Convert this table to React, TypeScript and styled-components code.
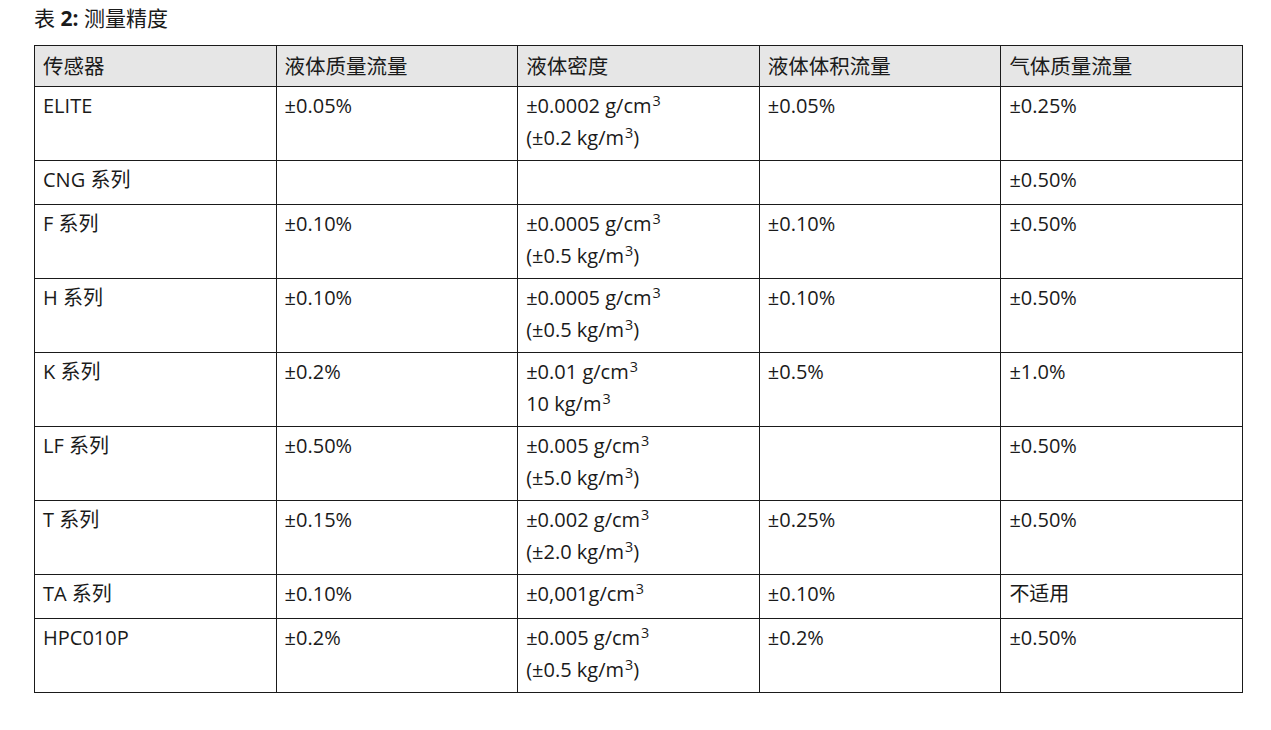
import React from 'react'
import styled, { createGlobalStyle } from 'styled-components'

const GlobalStyle = createGlobalStyle`
  html, body {
    margin: 0;
    padding: 0;
    background: #fff;
  }
  body {
    font-family: "Open Sans", "Noto Sans CJK SC", sans-serif;
    color: #1a1a1a;
  }
`

type Cell = React.ReactNode

const Sup = styled.sup`
  font-size: 0.72em;
  line-height: 0;
  vertical-align: 0.5em;
  margin-left: 1px;
`

const density = (value: string, kg: string, paren = true) => (
  <>
    {value}<Sup>3</Sup>
    {kg && (
      <>
        <br />
        {paren ? `(${kg}` : kg}<Sup>3</Sup>{paren ? ')' : ''}
      </>
    )}
  </>
)

const rows: { tall: boolean; cells: Cell[] }[] = [
  { tall: true, cells: ['ELITE', '±0.05%', density('±0.0002 g/cm', '±0.2 kg/m'), '±0.05%', '±0.25%'] },
  { tall: false, cells: ['CNG 系列', '', '', '', '±0.50%'] },
  { tall: true, cells: ['F 系列', '±0.10%', density('±0.0005 g/cm', '±0.5 kg/m'), '±0.10%', '±0.50%'] },
  { tall: true, cells: ['H 系列', '±0.10%', density('±0.0005 g/cm', '±0.5 kg/m'), '±0.10%', '±0.50%'] },
  { tall: true, cells: ['K 系列', '±0.2%', density('±0.01 g/cm', '10 kg/m', false), '±0.5%', '±1.0%'] },
  { tall: true, cells: ['LF 系列', '±0.50%', density('±0.005 g/cm', '±5.0 kg/m'), '', '±0.50%'] },
  { tall: true, cells: ['T 系列', '±0.15%', density('±0.002 g/cm', '±2.0 kg/m'), '±0.25%', '±0.50%'] },
  { tall: false, cells: ['TA 系列', '±0.10%', density('±0,001g/cm', ''), '±0.10%', '不适用'] },
  { tall: true, cells: ['HPC010P', '±0.2%', density('±0.005 g/cm', '±0.5 kg/m'), '±0.2%', '±0.50%'] },
]

const headers = ['传感器', '液体质量流量', '液体密度', '液体体积流量', '气体质量流量']

const Page = styled.div`
  padding: 4px 34px 0;
`

const Caption = styled.div`
  font-size: 21px;
  line-height: 28px;
  height: 41px;
  b {
    font-weight: 700;
  }
`

const Table = styled.table`
  border-collapse: collapse;
  table-layout: fixed;
  width: 1209px;
`

const HeadCell = styled.th`
  background: #e6e6e6;
  border: 1px solid #1a1a1a;
  height: 40px;
  padding: 0 8px;
  text-align: left;
  font-weight: 400;
  font-size: 20.5px;
  line-height: 32px;
  vertical-align: middle;
`

const BodyRow = styled.tr<{ $tall: boolean }>`
  height: ${p => (p.$tall ? 74 : 44)}px;
`

const BodyCell = styled.td`
  border: 1px solid #1a1a1a;
  padding: 3px 8px 0;
  font-size: 20px;
  line-height: 32px;
  vertical-align: top;
`

export default function App() {
  return (
    <Page>
      <GlobalStyle />
      <Caption>
        表 <b>2:</b> 测量精度
      </Caption>
      <Table>
        <thead>
          <tr>
            {headers.map(h => (
              <HeadCell key={h}>{h}</HeadCell>
            ))}
          </tr>
        </thead>
        <tbody>
          {rows.map((r, i) => (
            <BodyRow key={i} $tall={r.tall}>
              {r.cells.map((c, j) => (
                <BodyCell key={j}>{c}</BodyCell>
              ))}
            </BodyRow>
          ))}
        </tbody>
      </Table>
    </Page>
  )
}
